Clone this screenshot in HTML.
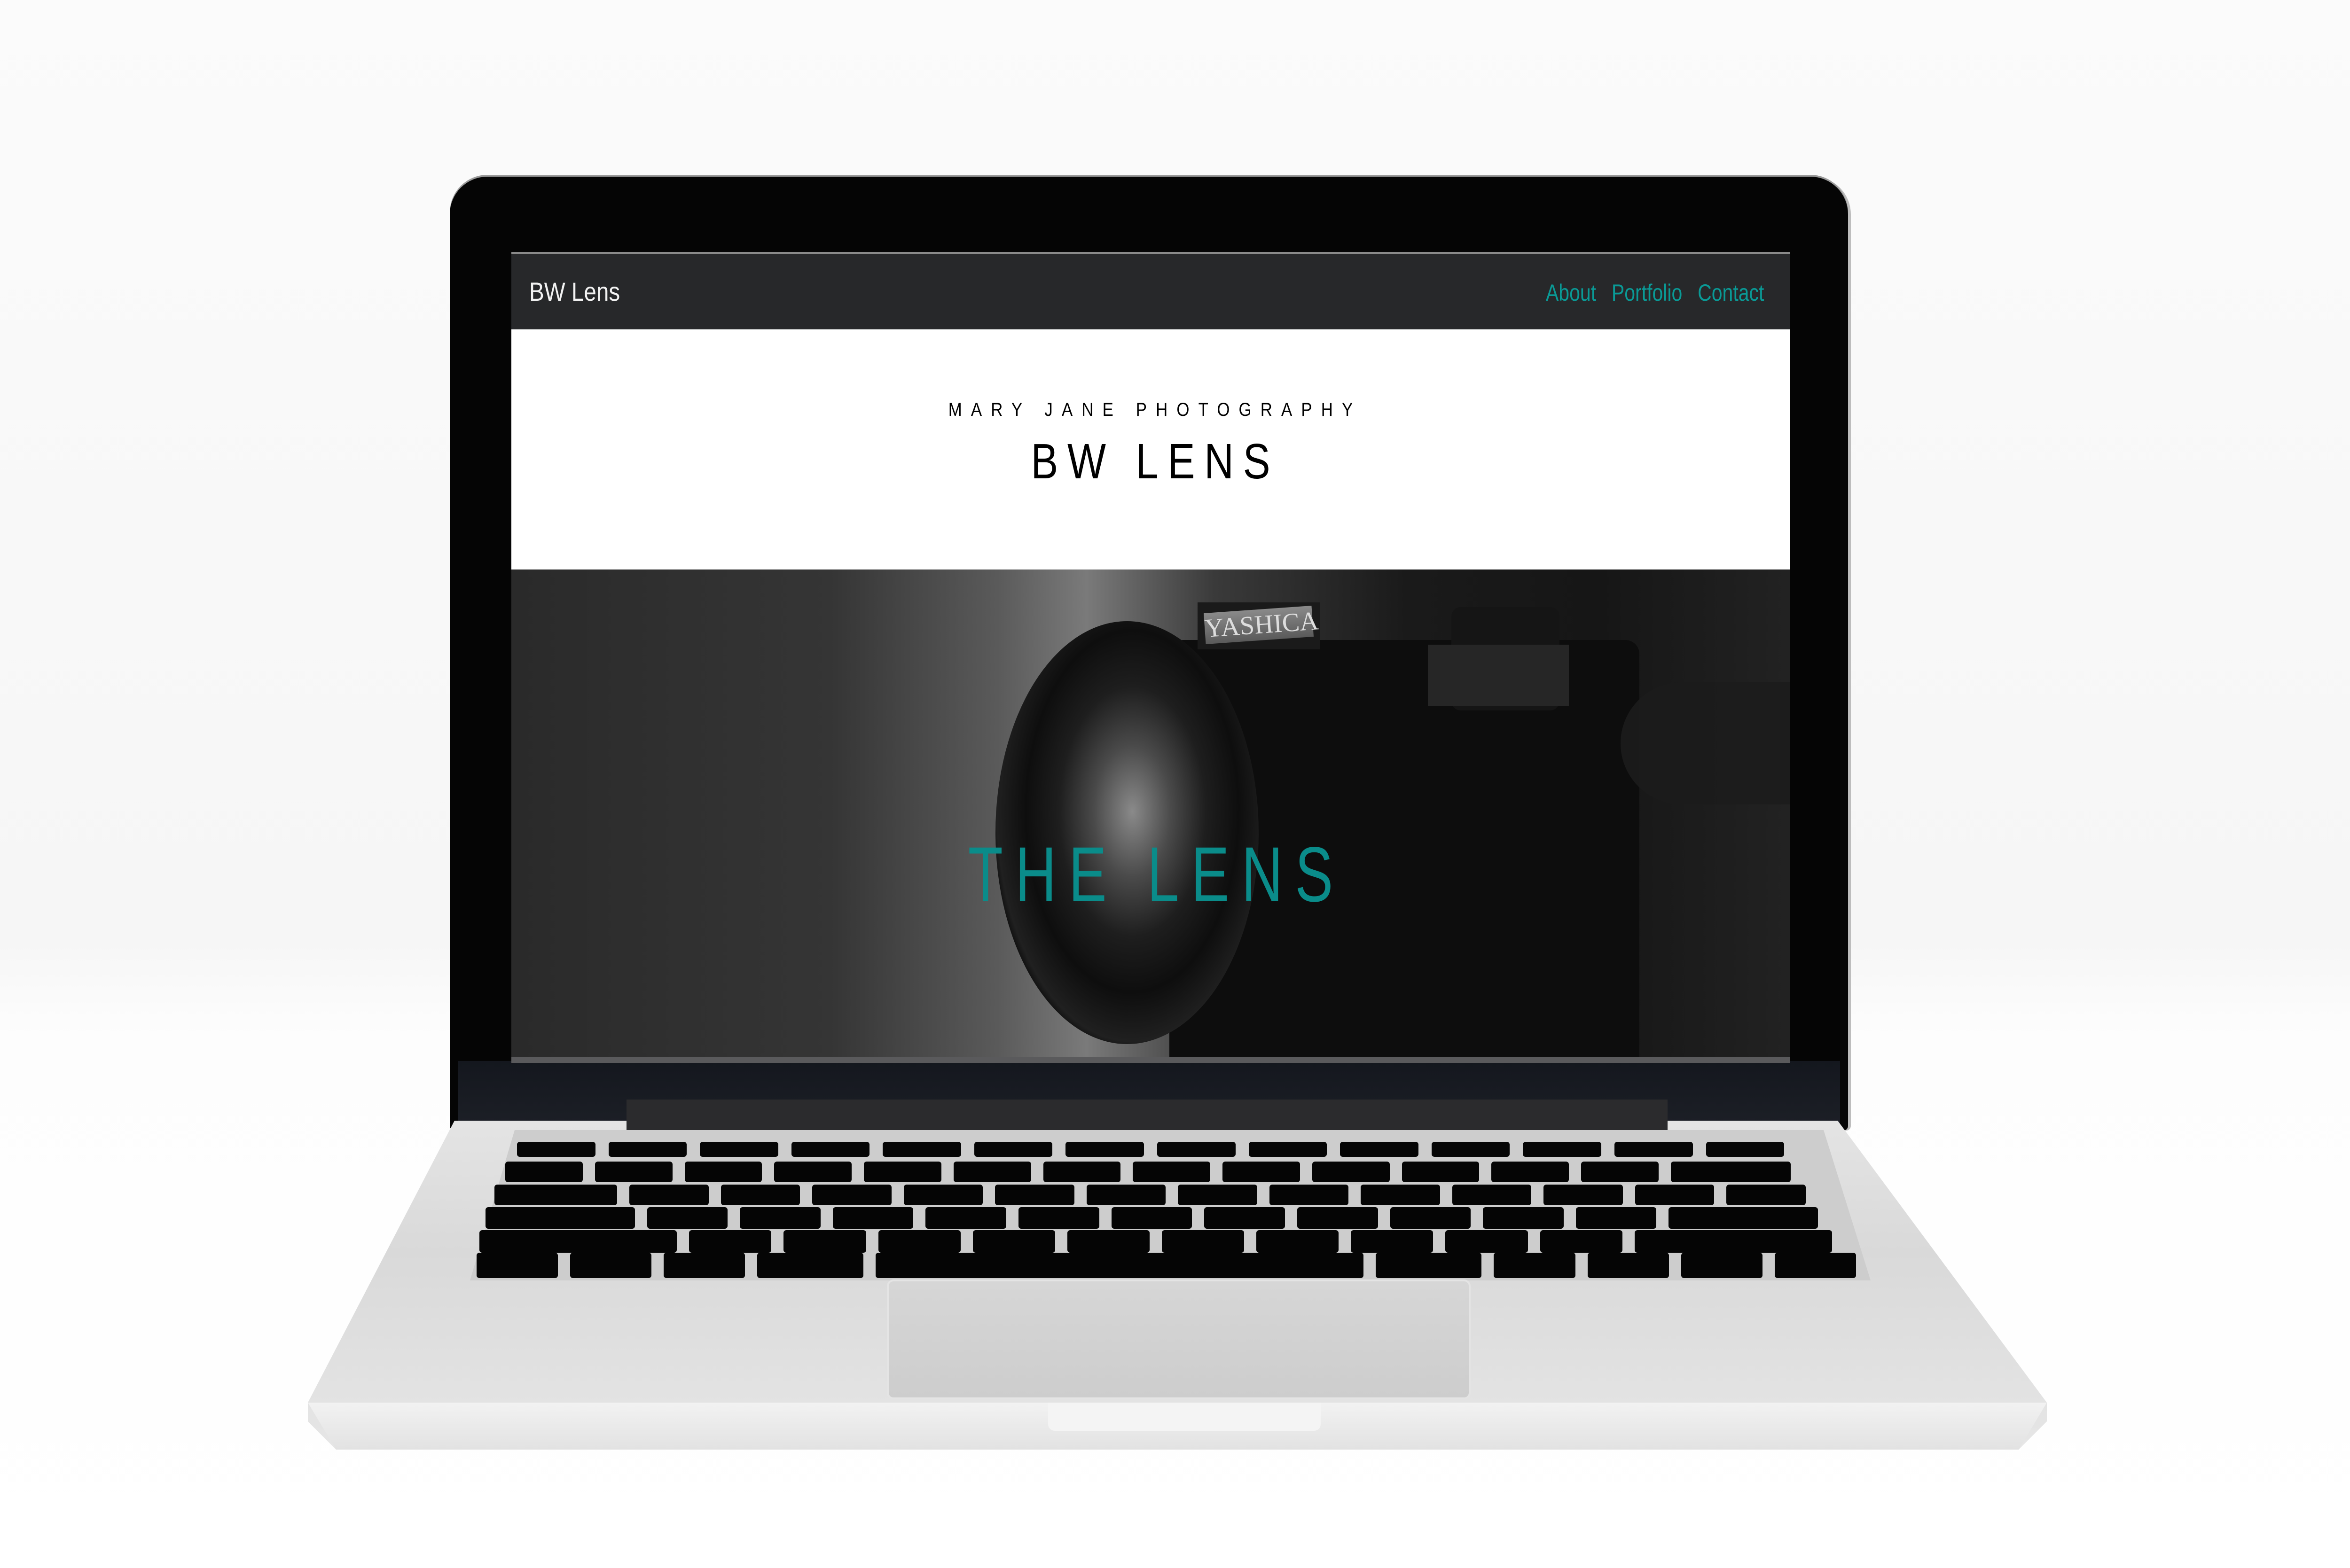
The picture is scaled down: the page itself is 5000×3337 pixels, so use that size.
<!DOCTYPE html>
<html><head><meta charset="utf-8">
<style>
html,body{margin:0;padding:0;}
body{width:5000px;height:3337px;position:relative;overflow:hidden;background:linear-gradient(#fbfbfb,#f6f6f6 60%,#fdfdfd 66%,#fff);font-family:"Liberation Sans",sans-serif;}
.abs{position:absolute;}
#lid{left:957px;top:376px;width:2975px;height:2030px;background:#050505;border-radius:80px 80px 10px 10px;box-shadow:0 -4px 0 #9a9a9a, 6px 0 0 #bdbdbd;}
#lidbot{left:975px;top:2258px;width:2940px;height:150px;background:linear-gradient(#14171e,#1d2027);}
#hinge{left:1333px;top:2340px;width:2215px;height:70px;background:#2b2b2d;}
#base{left:655px;top:2385px;width:3700px;height:700px;background:linear-gradient(#e4e4e4,#d9d9d9 40%,#e6e6e6);clip-path:polygon(312px 0,3255px 0,3700px 600px,3700px 640px,3640px 700px,60px 700px,0 640px,0 600px);}
#lip{left:655px;top:2985px;width:3700px;height:100px;background:linear-gradient(#f2f2f2,#e2e2e2);clip-path:polygon(0 0,3700px 0,3640px 100px,60px 100px);}
#well{left:1000px;top:2405px;width:2980px;height:320px;background:#cdcdcd;clip-path:polygon(95px 0,2880px 0,2980px 320px,0 320px);}
#pad{left:1891px;top:2727px;width:1234px;height:247px;background:linear-gradient(#d6d6d6,#cdcdcd);border-radius:10px;box-shadow:0 0 0 4px #e4e4e4;}
#notch{left:2230px;top:2985px;width:580px;height:60px;background:#f4f4f4;border-radius:0 0 14px 14px;}
#screen{left:1088px;top:536px;width:2720px;height:1714px;background:#fff;overflow:hidden;}
#nav{left:0;top:0;width:2720px;height:165px;background:#27282a;border-top:4px solid #8a8a8a;box-sizing:border-box;}
#brand{left:38px;top:48px;color:#f2f2f2;font-size:56px;transform:scaleX(.85);transform-origin:left;}
#links{right:55px;top:54px;color:#0a9a96;font-size:50px;transform:scaleX(.82);transform-origin:right;}
#links span{margin-left:40px;}
#hero{left:0;top:676px;width:2720px;height:1040px;overflow:hidden;background:linear-gradient(90deg,#2a2a2a 0%,#353535 25%,#5a5a5a 38%,#7a7a7a 45%,#3a3a3a 55%,#1a1a1a 70%,#161616 85%,#222 100%);}
.t{width:100%;text-align:center;color:#000;}
.r{display:flex;}
.r div{flex:1;background:#050505;border-radius:6px;}
</style></head><body>
<div id="lid" class="abs"></div>
<div id="lidbot" class="abs"></div>
<div id="base" class="abs"></div>
<div id="lip" class="abs"></div>
<div id="hinge" class="abs"></div>
<div id="well" class="abs"></div>
<div id="pad" class="abs"></div>
<div id="notch" class="abs"></div>

<div class="abs r" style="left:1100px;top:2430px;width:2696px;height:32px;gap:28px;">
<div></div><div></div><div></div><div></div><div></div><div></div><div></div><div></div><div></div><div></div><div></div><div></div><div></div><div></div></div>
<div class="abs r" style="left:1075px;top:2472px;width:2735px;height:44px;gap:26px;">
<div></div><div></div><div></div><div></div><div></div><div></div><div></div><div></div><div></div><div></div><div></div><div></div><div></div><div style="flex:1.55"></div></div>
<div class="abs r" style="left:1052px;top:2521px;width:2790px;height:44px;gap:26px;">
<div style="flex:1.55"></div><div></div><div></div><div></div><div></div><div></div><div></div><div></div><div></div><div></div><div></div><div></div><div></div><div></div></div>
<div class="abs r" style="left:1033px;top:2569px;width:2835px;height:46px;gap:26px;">
<div style="flex:1.85"></div><div></div><div></div><div></div><div></div><div></div><div></div><div></div><div></div><div></div><div></div><div></div><div style="flex:1.85"></div></div>
<div class="abs r" style="left:1020px;top:2618px;width:2878px;height:48px;gap:26px;">
<div style="flex:2.4"></div><div></div><div></div><div></div><div></div><div></div><div></div><div></div><div></div><div></div><div></div><div style="flex:2.4"></div></div>
<div class="abs r" style="left:1014px;top:2666px;width:2935px;height:54px;gap:26px;">
<div></div><div></div><div></div><div style="flex:1.3"></div><div style="flex:6"></div><div style="flex:1.3"></div><div></div><div></div><div></div><div></div></div>

<div id="screen" class="abs">
  <div id="nav" class="abs">
    <div id="brand" class="abs">BW Lens</div>
    <div id="links" class="abs"><span>About</span><span>Portfolio</span><span>Contact</span></div>
  </div>
  <div class="abs t" style="top:314px;font-size:40px;letter-spacing:22px;text-indent:22px;transform:scaleX(.87);">MARY JANE PHOTOGRAPHY</div>
  <div class="abs t" style="top:386px;font-size:106px;letter-spacing:24px;text-indent:24px;transform:scaleX(.82);">BW LENS</div>
  <div id="hero" class="abs">
    <div class="abs" style="left:1400px;top:150px;width:1000px;height:900px;background:#0d0d0d;border-radius:30px 30px 0 0;"></div>
    <div class="abs" style="left:2000px;top:80px;width:230px;height:220px;background:#151515;border-radius:20px;"></div>
    <div class="abs" style="left:1950px;top:160px;width:300px;height:130px;background:#262626;"></div>
    <div class="abs" style="left:2360px;top:240px;width:400px;height:260px;background:#1c1c1c;border-radius:130px 0 0 130px;opacity:.9;"></div>
    <div class="abs" style="left:1460px;top:70px;width:260px;height:100px;background:#1a1a1a;"></div>
    <div class="abs" style="left:1475px;top:85px;width:230px;height:66px;background:linear-gradient(#8a8a8a,#5a5a5a);color:#ddd;font-family:'Liberation Serif',serif;font-size:56px;text-align:center;line-height:66px;transform:rotate(-4deg);">YASHICA</div>
    <div class="abs" style="left:1030px;top:110px;width:560px;height:900px;border-radius:50%;background:radial-gradient(ellipse at 52% 45%,#8a8a8a 0%,#4a4a4a 20%,#1e1e1e 38%,#0e0e0e 55%,#202020 70%,#050505 75%);"></div>
    <div class="t abs" style="top:555px;color:#0a8c8a;font-size:166px;letter-spacing:36px;text-indent:36px;transform:scaleX(.73);">THE LENS</div>
  </div>
</div>
<div class="abs" style="left:1088px;top:2250px;width:2720px;height:12px;background:#5a5a5c;"></div>
</body></html>
